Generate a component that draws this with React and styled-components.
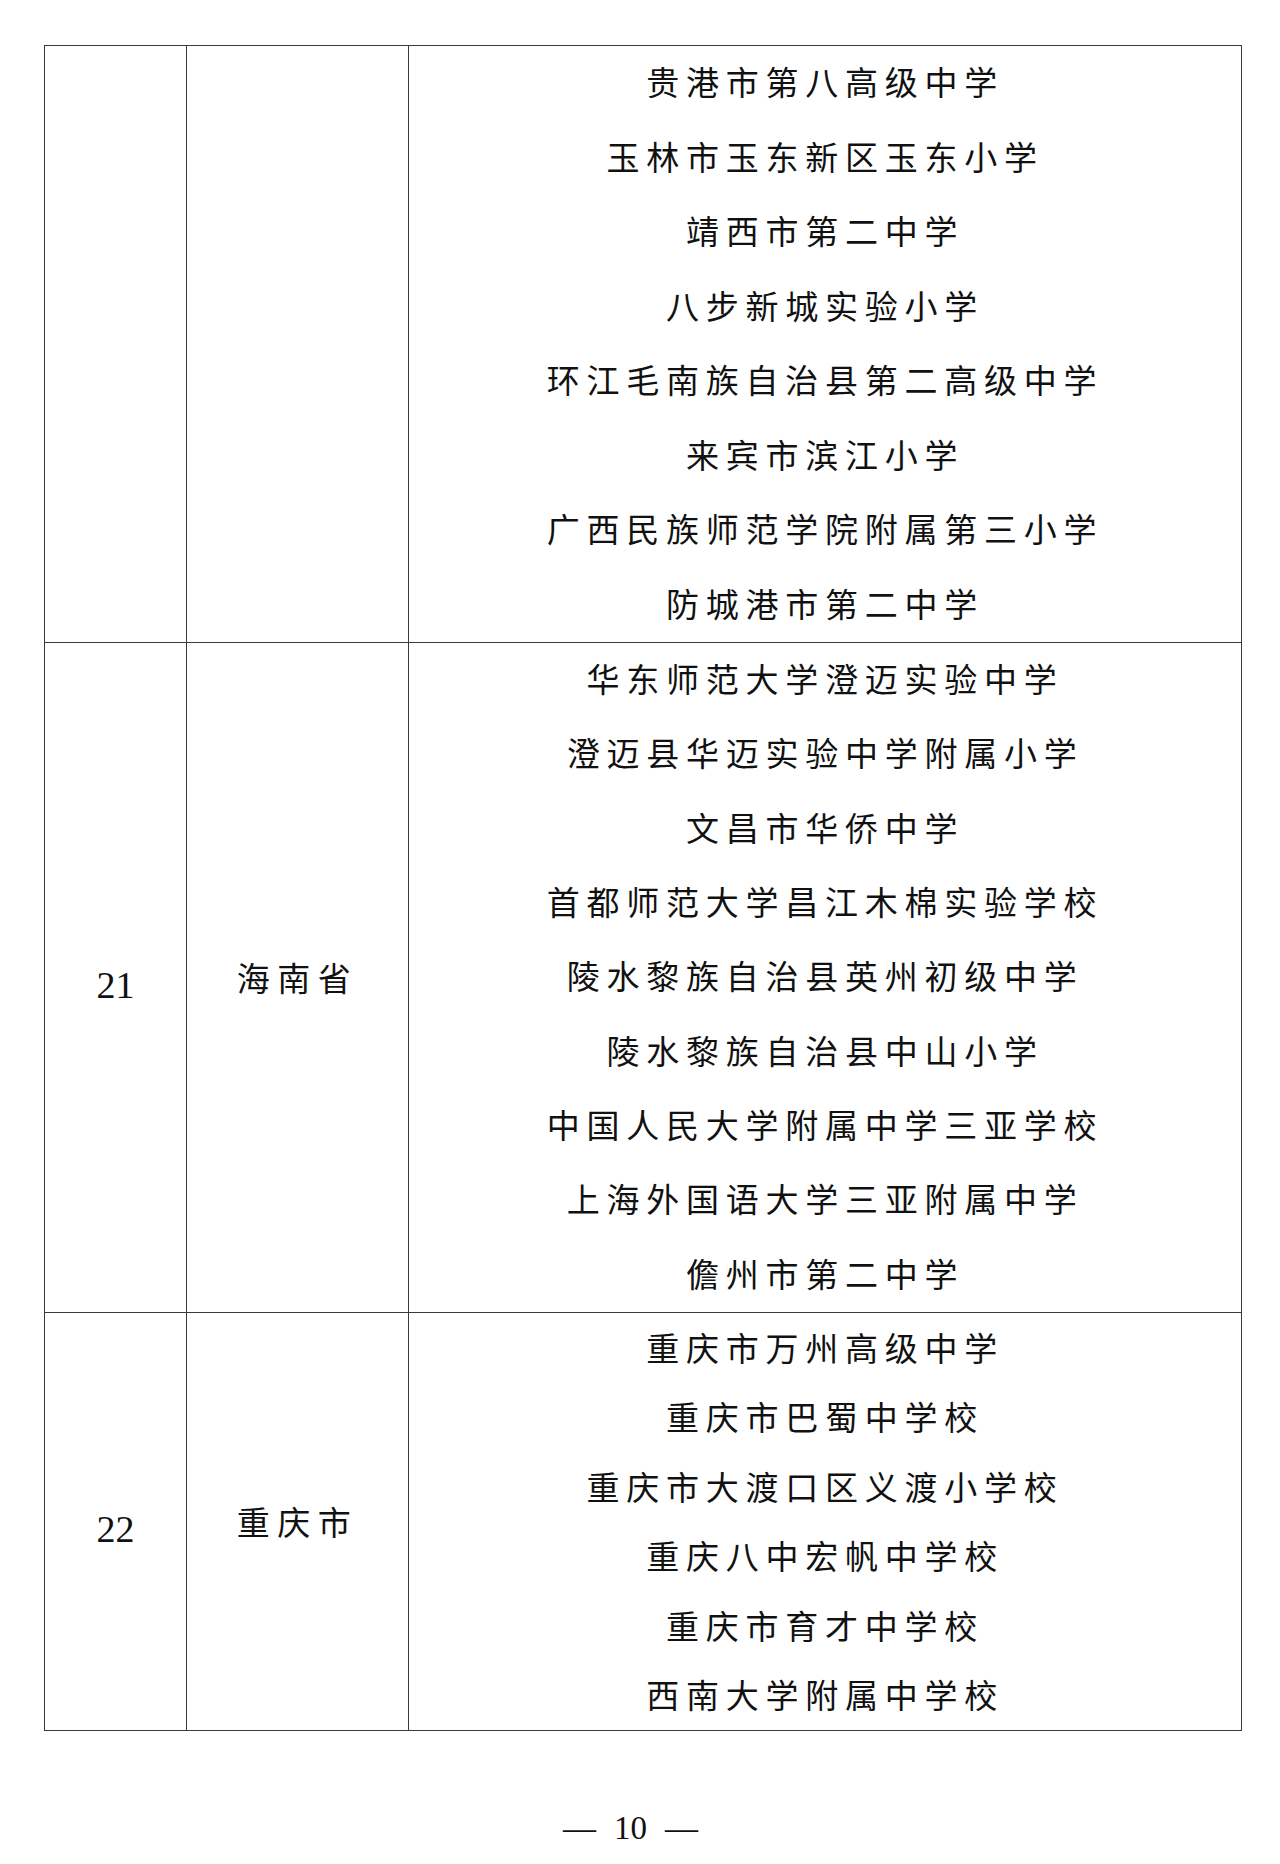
import React from 'react'
import styled, { createGlobalStyle } from 'styled-components'

const GlobalStyle = createGlobalStyle`
  html, body {
    margin: 0;
    padding: 0;
    background: #ffffff;
  }
  body {
    font-family: "Noto Sans CJK SC", "Liberation Serif", serif;
    color: #111111;
  }
`

const Page = styled.div`
  width: 1280px;
  min-height: 1864px;
  padding-top: 45px;
  box-sizing: border-box;
`

const Table = styled.table`
  margin-left: 44px;
  width: 1198px;
  border-collapse: collapse;
  border: 1px solid #3a3a3a;
  table-layout: fixed;
`

const Cell = styled.td`
  border: 1px solid #3a3a3a;
  padding: 0;
  text-align: center;
  vertical-align: middle;
`

const NumberCell = styled(Cell)`
  width: 141px;
  padding-top: 16px;
  font-family: "Liberation Serif", serif;
  font-size: 38px;
  line-height: 40px;
  color: #111;
`

const ProvinceCell = styled(Cell)`
  width: 221px;
  font-family: "Noto Sans CJK SC", sans-serif;
  font-weight: 400;
  font-size: 33px;
  letter-spacing: 7.5px;
  line-height: 40px;
`

const SchoolCell = styled(Cell)`
  font-family: "Noto Sans CJK SC", sans-serif;
  font-weight: 400;
  font-size: 33px;
  letter-spacing: 6.75px;
  line-height: ${p => p.$line}px;
`

// lift moves each line up without changing the row height
const School = styled.div`
  white-space: nowrap;
  margin: ${p => -p.$lift}px 0 ${p => p.$lift}px;
`

const Footer = styled.div`
  margin-top: 77px;
  display: flex;
  justify-content: center;
  align-items: center;
  gap: 18px;
  padding-right: 19px;
  font-family: "Liberation Serif", serif;
  font-size: 33px;
  line-height: 40px;
  color: #111;
`

const rows = [
  {
    no: '',
    province: '',
    line: 74.5,
    lift: 2,
    schools: [
      '贵港市第八高级中学',
      '玉林市玉东新区玉东小学',
      '靖西市第二中学',
      '八步新城实验小学',
      '环江毛南族自治县第二高级中学',
      '来宾市滨江小学',
      '广西民族师范学院附属第三小学',
      '防城港市第二中学'
    ]
  },
  {
    no: '21',
    province: '海南省',
    line: 74.33,
    lift: 2,
    schools: [
      '华东师范大学澄迈实验中学',
      '澄迈县华迈实验中学附属小学',
      '文昌市华侨中学',
      '首都师范大学昌江木棉实验学校',
      '陵水黎族自治县英州初级中学',
      '陵水黎族自治县中山小学',
      '中国人民大学附属中学三亚学校',
      '上海外国语大学三亚附属中学',
      '儋州市第二中学'
    ]
  },
  {
    no: '22',
    province: '重庆市',
    line: 69.5,
    lift: 0,
    schools: [
      '重庆市万州高级中学',
      '重庆市巴蜀中学校',
      '重庆市大渡口区义渡小学校',
      '重庆八中宏帆中学校',
      '重庆市育才中学校',
      '西南大学附属中学校'
    ]
  }
]

const App = () => (
  <Page>
    <GlobalStyle />
    <Table>
      <tbody>
        {rows.map((row, i) => (
          <tr key={i}>
            <NumberCell>{row.no}</NumberCell>
            <ProvinceCell>{row.province}</ProvinceCell>
            <SchoolCell $line={row.line}>
              {row.schools.map(s => <School key={s} $lift={row.lift}>{s}</School>)}
            </SchoolCell>
          </tr>
        ))}
      </tbody>
    </Table>
    <Footer>
      <span>—</span>
      <span>10</span>
      <span>—</span>
    </Footer>
  </Page>
)

export default App
